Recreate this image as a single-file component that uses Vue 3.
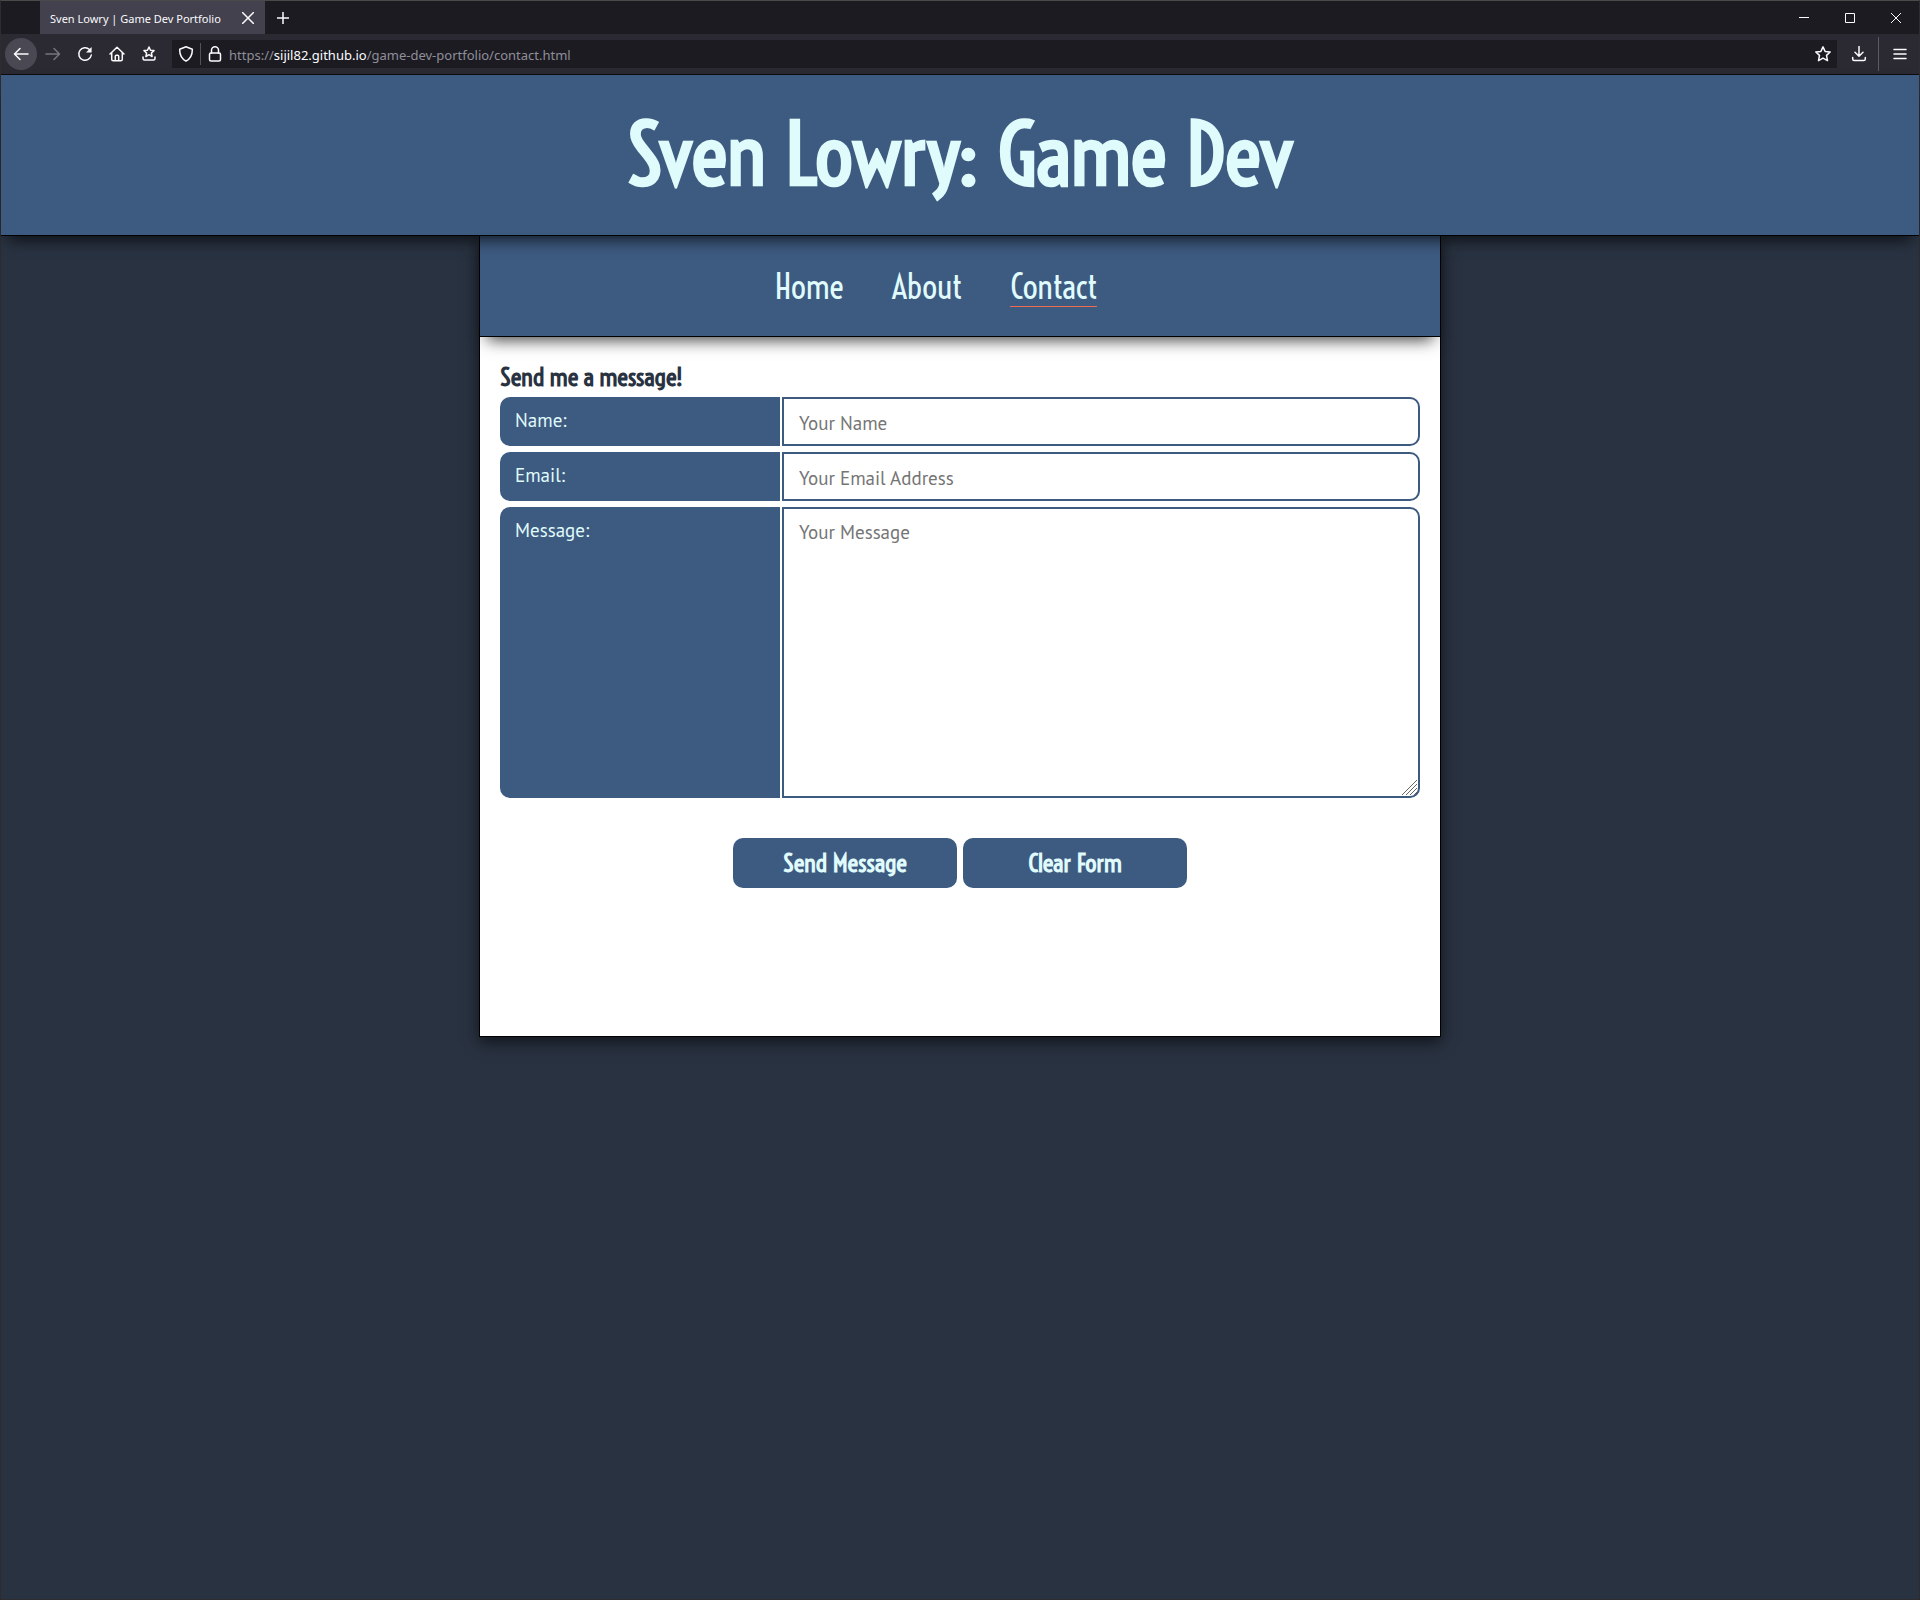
<script setup>
import { ref } from 'vue'

const name = ref('')
const email = ref('')
const message = ref('')

const links = [
  { label: 'Home', href: '#home' },
  { label: 'About', href: '#about' },
  { label: 'Contact', href: '#contact', active: true },
]

function clearForm() {
  name.value = ''
  email.value = ''
  message.value = ''
}
</script>

<template>
  <div class="window">
    <div class="chrome">
      <div class="tabs">
        <div class="tab">
          <span class="tab-title">Sven Lowry | Game Dev Portfolio</span>
          <button class="icon close-tab" aria-label="Close tab">
            <svg width="12" height="12" viewBox="0 0 12 12"><path d="M0.5 0.5 11.5 11.5M11.5 0.5 0.5 11.5" /></svg>
          </button>
        </div>
        <button class="icon new-tab" aria-label="New tab">
          <svg width="12" height="12" viewBox="0 0 12 12"><path d="M6 0V12M0 6H12" /></svg>
        </button>
        <div class="controls">
          <button class="icon" aria-label="Minimize">
            <svg width="10" height="10" viewBox="0 0 10 10" class="thin"><path d="M0 4.5H10" /></svg>
          </button>
          <button class="icon" aria-label="Maximize">
            <svg width="10" height="10" viewBox="0 0 10 10" class="thin"><path d="M0.5 0.5H9.5V9.5H0.5Z" /></svg>
          </button>
          <button class="icon" aria-label="Close">
            <svg width="10" height="10" viewBox="0 0 10 10" class="thin"><path d="M0 0 10 10M10 0 0 10" /></svg>
          </button>
        </div>
      </div>

      <div class="toolbar">
        <button class="icon tool back" aria-label="Back">
          <svg width="16" height="16" viewBox="0 0 16 16"><path d="M15 8H2M7 2.5 1.5 8 7 13.5" /></svg>
        </button>
        <button class="icon tool forward" aria-label="Forward" disabled>
          <svg width="16" height="16" viewBox="0 0 16 16"><path d="M1 8H14M9 2.5 14.5 8 9 13.5" /></svg>
        </button>
        <button class="icon tool" aria-label="Reload">
          <svg width="16" height="16" viewBox="0 0 16 16"><path d="M12.5 3.5A6.3 6.3 0 1 0 14.3 9" /><path class="solid" d="M14.6 1V6.6H9Z" /></svg>
        </button>
        <button class="icon tool" aria-label="Home">
          <svg width="16" height="16" viewBox="0 0 16 16"><path d="M1 8 8 1.3 15 8M2.7 6.5V13.2Q2.7 14.7 4.2 14.7H11.8Q13.3 14.7 13.3 13.2V6.5M6.3 14.5V10.3Q6.3 9.3 7.3 9.3H8.7Q9.7 9.3 9.7 10.3V14.5" /></svg>
        </button>
        <button class="icon tool" aria-label="Bookmarks">
          <svg width="16" height="16" viewBox="0 0 16 16"><path d="M8 1 9.5 4.2 13 4.6 10.4 7 11.1 10.5 8 8.7 4.9 10.5 5.6 7 3 4.6 6.5 4.2ZM2 11V12.5Q2 14 3.5 14H12.5Q14 14 14 12.5V11" /></svg>
        </button>

        <div class="address">
          <button class="icon shield" aria-label="Tracking protection">
            <svg width="16" height="16" viewBox="0 0 16 16"><path d="M8 .8 14.3 3.2C14.5 8 12.8 12.5 8 15.2 3.2 12.5 1.5 8 1.7 3.2Z" /></svg>
          </button>
          <span class="divider"></span>
          <button class="icon lock" aria-label="Site security">
            <svg width="16" height="16" viewBox="0 0 16 16"><rect x="2.5" y="7" width="11" height="8" rx="1.5" /><path d="M4.5 7V4.3A3.5 3.5 0 0 1 11.5 4.3V7" /></svg>
          </button>
          <span class="url">https://<b>sijil82.github.io</b>/game-dev-portfolio/contact.html</span>
          <button class="icon star" aria-label="Bookmark this page">
            <svg width="16" height="16" viewBox="0 0 16 16"><path d="M8 .9 10.1 5.4 15.2 6 11.5 9.4 12.5 14.6 8 12.1 3.5 14.6 4.5 9.4 .8 6 5.9 5.4Z" /></svg>
          </button>
        </div>

        <button class="icon tool" aria-label="Downloads">
          <svg width="16" height="16" viewBox="0 0 16 16"><path d="M8 0.5V10M4 6.3 8 10.3 12 6.3M1.7 11.5V13Q1.7 14.5 3.2 14.5H12.8Q14.3 14.5 14.3 13V11.5" /></svg>
        </button>
        <span class="bar"></span>
        <button class="icon tool" aria-label="Menu">
          <svg width="14" height="14" viewBox="0 0 14 14"><path d="M1 2.5H13M1 7H13M1 11.5H13" /></svg>
        </button>
      </div>
    </div>

    <header class="banner">
      <h1>Sven Lowry: Game Dev</h1>
    </header>

    <main class="card">
      <nav class="menu">
        <a v-for="link in links" :key="link.label" :href="link.href" :class="{ active: link.active }">{{ link.label }}</a>
      </nav>

      <form class="form" @submit.prevent>
        <h2>Send me a message!</h2>
        <div class="rows">
          <div class="row">
            <label for="name">Name:</label>
            <input id="name" v-model="name" type="text" placeholder="Your Name" />
          </div>
          <div class="row">
            <label for="email">Email:</label>
            <input id="email" v-model="email" type="email" placeholder="Your Email Address" />
          </div>
          <div class="row">
            <label for="message">Message:</label>
            <textarea id="message" v-model="message" placeholder="Your Message"></textarea>
            <svg class="grip" width="15" height="15" viewBox="0 0 15 15"><path d="M0 15 15 0M4 15 15 4M8 15 15 8M12 15 15 12" /></svg>
          </div>
        </div>
        <div class="actions">
          <button type="submit">Send Message</button>
          <button type="button" @click="clearForm">Clear Form</button>
        </div>
      </form>
    </main>
  </div>
</template>

<style>
body {
  margin: 0;
  background: #293241;
}
</style>

<style scoped>
* {
  box-sizing: border-box;
}

.window {
  min-height: 100vh;
  border: 1px solid #2d2d30;
  border-top-color: #4a4a4a;
  background: #293241;
}

/* Browser frame */
.chrome {
  border-bottom: 1px solid #0c0c0d;
  background: #2b2a33;
  color: #fbfbfe;
  font-family: "Noto Sans", "Open Sans", sans-serif;
}

.icon {
  display: flex;
  align-items: center;
  justify-content: center;
  flex: none;
  padding: 0;
  border: 0;
  background: none;
  color: inherit;
}

.icon svg {
  fill: none;
  stroke: currentColor;
  stroke-width: 1.5;
  stroke-linecap: round;
  stroke-linejoin: round;
}

.icon svg.thin {
  stroke-width: 1;
  stroke-linecap: butt;
}

.icon .solid {
  fill: currentColor;
  stroke: none;
}

.tabs {
  display: flex;
  height: 33px;
  padding-left: 39px;
  background: #1c1b22;
}

.tab {
  display: flex;
  align-items: center;
  justify-content: space-between;
  width: 225px;
  padding: 0 7px 0 10px;
  background: #42414d;
}

.tab-title {
  padding-top: 2px;
  font-size: 11px;
  white-space: nowrap;
}

.close-tab {
  width: 20px;
  height: 20px;
}

.new-tab {
  width: 36px;
}

.controls {
  display: flex;
  margin-left: auto;
}

.controls .icon {
  width: 46px;
}

.toolbar {
  display: flex;
  align-items: center;
  height: 40px;
  padding: 0 3px 0 4px;
}

.tool {
  width: 32px;
  height: 32px;
  border-radius: 50%;
}

.back {
  background: #4a4953;
}

.forward {
  color: #77767e;
}

.address {
  display: flex;
  align-items: center;
  flex: 1;
  height: 28px;
  margin: 0 6px 0 7px;
  background: #1c1b22;
}

.shield {
  width: 28px;
}

.divider {
  width: 1px;
  height: 22px;
  background: #52515c;
}

.lock {
  width: 28px;
}

.url {
  flex: 1;
  padding-top: 2px;
  color: #8f8f99;
  font-size: 13px;
}

.url b {
  color: #fbfbfe;
  font-weight: 400;
}

.star {
  width: 28px;
}

.bar {
  width: 1px;
  height: 34px;
  margin: 0 5px 0 3px;
  background: #5b5b66;
}

/* Site */
.banner {
  position: relative;
  z-index: 1;
  border-bottom: 1px solid #000;
  background: #3d5a80;
  box-shadow: 0 10px 15px -7px rgba(0, 0, 0, 0.75);
  color: #e0fbfc;
  text-align: center;
}

h1 {
  margin: 0;
  font: 700 84px/160px Voltaire, "Open Sans Condensed", sans-serif;
}

.card {
  max-width: 962px;
  min-height: 801px;
  margin: 0 auto;
  border: 1px solid #000;
  border-top: 0;
  background: #fff;
  box-shadow: 0 5px 15px 0 rgba(0, 0, 0, 0.6);
}

.menu {
  display: flex;
  justify-content: center;
  height: 101px;
  padding-top: 30px;
  border-bottom: 1px solid #000;
  background: #3d5a80;
  box-shadow: 0 10px 15px -7px rgba(0, 0, 0, 0.75);
}

.menu a {
  height: 41px;
  margin-right: 48px;
  color: #e0fbfc;
  font: 400 33px/42px Voltaire, "Open Sans Condensed", sans-serif;
  text-decoration: none;
}

.menu .active {
  border-bottom: 1px solid #ee6c4d;
}

.form {
  padding: 20px;
}

h2 {
  margin: 0;
  color: #293241;
  font: 700 25px/40px Voltaire, "Open Sans Condensed", sans-serif;
}

.rows {
  display: flex;
  flex-direction: column;
  gap: 6px;
}

.row {
  display: flex;
  gap: 2px;
  position: relative;
  font: 400 19px/25px "PT Sans", "Noto Sans", sans-serif;
}

label {
  width: 280px;
  padding: 11px 15px 9px;
  border-radius: 10px 0 0 10px;
  background: #3d5a80;
  color: #e0fbfc;
}

input,
textarea {
  flex: 1;
  min-width: 0;
  height: 49px;
  margin: 0;
  padding: 11px 15px 9px;
  border: 2px solid #3d5a80;
  border-radius: 0 10px 10px 0;
  outline: 0;
  background: #fff;
  color: #293241;
  font: inherit;
}

textarea {
  height: 291px;
  resize: none;
}

::placeholder {
  color: #757575;
}

.grip {
  position: absolute;
  right: 3px;
  bottom: 3px;
  fill: none;
  stroke: #666;
  pointer-events: none;
}

.actions {
  display: flex;
  justify-content: center;
  gap: 6px;
  margin-top: 40px;
}

.actions button {
  width: 224px;
  height: 50px;
  padding: 0;
  border: 0;
  border-radius: 10px;
  background: #3d5a80;
  color: #e0fbfc;
  font: 700 25px/30px Voltaire, "Open Sans Condensed", sans-serif;
}
</style>
